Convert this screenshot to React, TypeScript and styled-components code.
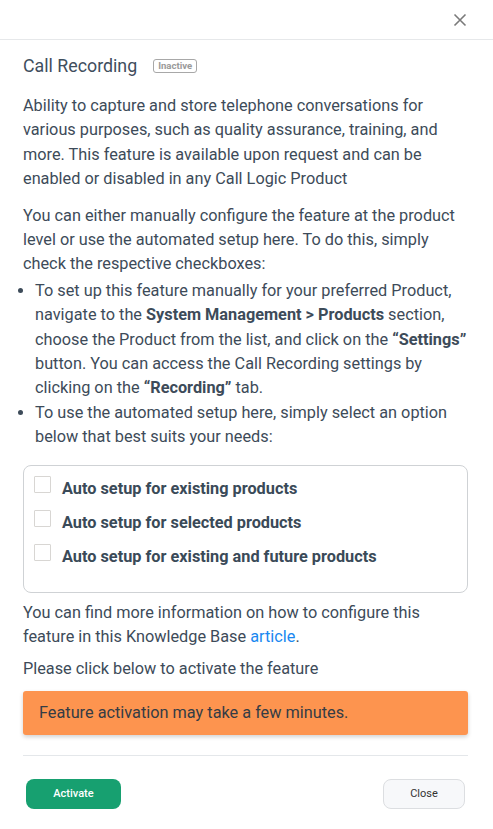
import React from 'react';
import { styled, createGlobalStyle } from 'styled-components';

const GlobalStyle = createGlobalStyle`
  body {
    margin: 0;
    background: #fff;
    font-family: Roboto, "Liberation Sans", sans-serif;
  }
`;

const Modal = styled.div`
  width: 493px;
  background: #fff;
  color: #3d4b59;
`;

const Header = styled.div`
  height: 40px;
  border-bottom: 1px solid #e6e8ea;
  display: flex;
  align-items: center;
  justify-content: flex-end;
  padding-right: 26px;
  box-sizing: border-box;
`;

const CloseIcon = styled.button`
  border: 0;
  background: none;
  padding: 0;
  width: 14px;
  height: 14px;
  display: flex;
  cursor: pointer;
`;

const Body = styled.div`
  padding: 13px 25px 0 23px;
`;

const TitleRow = styled.div`
  display: flex;
  align-items: center;
  gap: 16px;
  height: 24px;
  margin-bottom: 17px;
  h2 {
    margin: 0;
    font-size: 17.8px;
    font-weight: 400;
    color: #3f4e5d;
  }
`;

const Badge = styled.span`
  font-size: 9.6px;
  font-weight: 700;
  color: #9a9a9a;
  border: 1px solid #a8a8a8;
  border-radius: 3px;
  padding: 0 4px;
  line-height: 12px;
  margin-top: 1px;
`;

const Text = styled.p<{ $gap?: number }>`
  margin: 0 0 ${(p) => p.$gap ?? 12}px;
  font-size: 16.3px;
  line-height: 24.4px;
  a {
    color: #1a88f0;
    text-decoration: none;
  }
`;

const List = styled.ul`
  margin: 2px 0 15px;
  padding-left: 12px;
  font-size: 16.3px;
  line-height: 24.4px;
  b {
    font-weight: 700;
  }
`;

const OptionsBox = styled.div`
  border: 1px solid #cfd2d5;
  border-radius: 8px;
  padding: 10px 10px 0;
  height: 128px;
  box-sizing: border-box;
  display: flex;
  flex-direction: column;
  gap: 11px;
  margin-bottom: 8px;
`;

const Option = styled.label`
  display: flex;
  align-items: flex-start;
  gap: 11px;
  height: 23px;
  font-size: 16.3px;
  font-weight: 700;
  color: #3a4a58;
`;

const OptionText = styled.span`
  line-height: 20px;
  margin-top: 3px;
`;

const Box = styled.span`
  width: 17px;
  height: 17px;
  box-sizing: border-box;
  border: 1px solid #d8d6d3;
  border-radius: 1px;
  flex: none;
`;

const Alert = styled.div`
  background: #fd944f;
  border-radius: 3px;
  box-shadow: 0 2px 4px rgba(0, 0, 0, 0.18);
  height: 44px;
  display: flex;
  align-items: center;
  padding-left: 16px;
  font-size: 16.3px;
  color: #343c45;
  margin-top: 10px;
`;

const Divider = styled.hr`
  border: 0;
  border-top: 1px solid #e4e7ea;
  margin: 20px 0 23px;
`;

const Footer = styled.div`
  display: flex;
  justify-content: space-between;
  padding: 0 3px;
`;

const Button = styled.button<{ $primary?: boolean }>`
  height: 30px;
  border-radius: 8px;
  font-family: Roboto, "Liberation Sans", sans-serif;
  font-size: 11px;
  cursor: pointer;
  ${(p) =>
    p.$primary
      ? `
    width: 95px;
    background: #17a070;
    border: 0;
    color: #fff;
    font-weight: 500;
  `
      : `
    width: 82px;
    background: #f7f8fa;
    border: 1px solid #dcdee1;
    color: #333;
  `}
`;

const options = [
  'Auto setup for existing products',
  'Auto setup for selected products',
  'Auto setup for existing and future products',
];

const App = () => {
  return (
    <Modal>
      <GlobalStyle />
      <Header>
        <CloseIcon aria-label="close">
          <svg width="14" height="14" viewBox="0 0 14 14">
            <path d="M1.5 1.5 L12.5 12.5 M12.5 1.5 L1.5 12.5" stroke="#7a7a7a" strokeWidth="1.6" />
          </svg>
        </CloseIcon>
      </Header>
      <Body>
        <TitleRow>
          <h2>Call Recording</h2>
          <Badge>Inactive</Badge>
        </TitleRow>
        <Text>
          Ability to capture and store telephone conversations for various purposes, such as
          quality assurance, training, and more. This feature is available upon request and can
          be enabled or disabled in any Call Logic Product
        </Text>
        <Text $gap={0}>
          You can either manually configure the feature at the product level or use the automated
          setup here. To do this, simply check the respective checkboxes:
        </Text>
        <List>
          <li>
            To set up this feature manually for your preferred Product, navigate to the{' '}
            <b>System Management &gt; Products</b> section, choose the Product from the list, and
            click on the <b>“Settings”</b> button. You can access the Call Recording settings by
            clicking on the <b>“Recording”</b> tab.
          </li>
          <li>
            To use the automated setup here, simply select an option below that best suits your
            needs:
          </li>
        </List>
        <OptionsBox>
          {options.map((label) => (
            <Option key={label}>
              <Box />
              <OptionText>{label}</OptionText>
            </Option>
          ))}
        </OptionsBox>
        <Text $gap={7}>
          You can find more information on how to configure this feature in this Knowledge Base{' '}
          <a href="#">article</a>.
        </Text>
        <Text $gap={0}>Please click below to activate the feature</Text>
        <Alert>Feature activation may take a few minutes.</Alert>
        <Divider />
        <Footer>
          <Button $primary>Activate</Button>
          <Button>Close</Button>
        </Footer>
      </Body>
    </Modal>
  );
};

export default App;
